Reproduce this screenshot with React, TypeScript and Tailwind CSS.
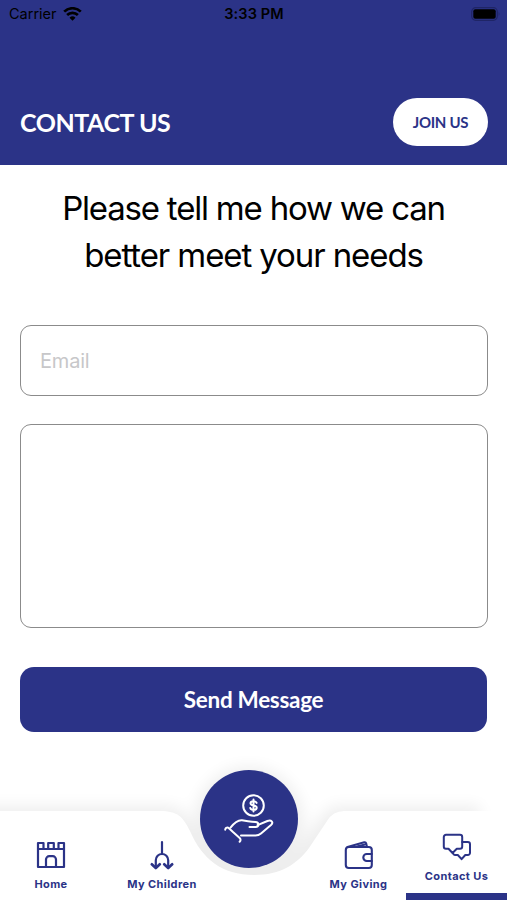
import type { ReactNode } from "react";

function WifiIcon() {
  return (
    <svg width="19" height="15" viewBox="0 0 19 15" fill="none" stroke="#000" strokeWidth="2.7">
      <path d="M1.2 4.6a12 12 0 0 1 16.6 0" />
      <path d="M4.1 8a7.8 7.8 0 0 1 10.8 0" />
      <path d="M9.5 13.7 6.500 10.700a4.300 4.300 0 0 1 6 0z" fill="#000" stroke="none" />
    </svg>
  );
}

function BatteryIcon() {
  return (
    <svg width="30" height="14" viewBox="0 0 30 14">
      <rect x="0.7" y="0.7" width="25.6" height="12.6" rx="4" fill="none" stroke="#1f2566" strokeWidth="1.2" />
      <rect x="2.3" y="2.3" width="22.4" height="9.4" rx="2" fill="#000" />
      <path d="M27.7 4.7q1.7 2.3 0 4.6z" fill="#1f2566" />
    </svg>
  );
}

function CastleIcon() {
  return (
    <svg width="30" height="28" viewBox="0 0 30 28" fill="none" stroke="#2b3387" strokeWidth="2.2" strokeLinejoin="round">
      <path d="M2 8V2h5.500v6M12.200 8V2h5.600v6M22.500 8V2H28v6" />
      <path d="M2 8h26v18H2z" />
      <path d="M10 26v-7.500a3.300 3.300 0 0 1 3.300-3.300h3.400a3.300 3.300 0 0 1 3.300 3.300V26" />
    </svg>
  );
}

function ChildrenIcon() {
  return (
    <svg width="26" height="30" viewBox="0 0 26 30" fill="none" stroke="#2b3387" strokeWidth="2.2" strokeLinecap="round" strokeLinejoin="round">
      <path d="M13 2v12" />
      <path d="M6.800 27.500V20.200a6.200 6.200 0 0 1 12.400 0v7.300" />
      <path d="M2.800 24.300l4 3.700 4-3.700" strokeWidth="2.700" />
      <path d="M15.200 24.300l4 3.700 4-3.700" strokeWidth="2.700" />
    </svg>
  );
}

function WalletIcon() {
  return (
    <svg width="30" height="30" viewBox="0 0 30 30" fill="none" stroke="#2b3387" strokeWidth="2.1" strokeLinejoin="round" strokeLinecap="round">
      <rect x="1.8" y="7" width="26" height="21" rx="3" />
      <path d="M3.5 7 20.2 2.300q1.500-.4 1.900 1L23 7" />
      <path d="M13 6.600 21 4.400" />
      <path d="M27.800 14h-5a3 3 0 0 0 0 7h5" />
    </svg>
  );
}

function ChatIcon() {
  return (
    <svg width="30" height="28" viewBox="0 0 30 28" fill="none" stroke="#2b3387" strokeWidth="2" strokeLinejoin="round" strokeLinecap="round">
      <path d="M4 1.800h14a2.200 2.200 0 0 1 2.200 2.200v9.600a2.200 2.200 0 0 1-2.200 2.200h-3.200L10.500 20l-4-4.200H4a2.200 2.200 0 0 1-2.200-2.200V4A2.200 2.200 0 0 1 4 1.800z" />
      <path d="M20.200 9h5.600a2.200 2.200 0 0 1 2.200 2.200v8.600a2.200 2.200 0 0 1-2.200 2.200h-2.500l-3.700 4.200-3.800-4.200h-2.600a2.200 2.200 0 0 1-2.200-2.200" />
    </svg>
  );
}

function GiveIcon() {
  return (
    <svg width="52" height="52" viewBox="0 0 52 52" fill="none" stroke="#fff" strokeWidth="2" strokeLinecap="round" strokeLinejoin="round">
      <circle cx="30.5" cy="12.5" r="10.3" />
      <path d="M33.600 9.900c-.5-1.200-1.500-1.700-3.100-1.700-1.800 0-3 .8-3 2.100 0 3.100 6.200 1.300 6.200 4.400 0 1.400-1.200 2.200-3.100 2.200-1.700 0-2.900-.7-3.300-1.900M30.500 6.500v12" />
      <path d="M2.200 36.700q.4-2.500 3.100-2 2.200 1.800 4.700 4.300l6.400 5.700q2.200 2 .2 4.100" />
      <path d="M7.500 34.700c4-5.200 7-7.800 11.500-7.400l6 .9c3 .4 5 .6 7.500.7 3.800.1 3.900 5.200.2 5.200h-6.200" />
      <path d="M34.600 32.200l9.800-4.200c3.800-1.700 6.500 1.200 3.600 4L38 40.500q-2.800 2.300-6.200 2H18" />
    </svg>
  );
}

interface TabProps {
  label: string;
  className: string;
  children: ReactNode;
}

function Tab({ label, className, children }: TabProps) {
  return (
    <button className={`flex flex-col items-center ${className}`}>
      <span className="flex h-[30px] items-center">{children}</span>
      <span className="mt-[7px] text-[11px] leading-[14px] font-bold tracking-[0.4px] whitespace-nowrap text-[#2b3387]">
        {label}
      </span>
    </button>
  );
}

export default function App() {
  return (
    <div className="flex h-[900px] w-[507px] flex-col overflow-hidden bg-white font-['Inter',sans-serif] text-black">
      {/* Header */}
      <header className="flex h-[165px] flex-col bg-[#2b3387]">
        <div className="grid h-7 grid-cols-3 items-center pr-[6px] pl-[9px]">
          <div className="flex items-center gap-[6px]">
            <span className="text-[14.5px]">Carrier</span>
            <WifiIcon />
          </div>
          <span className="-ml-[2px] text-center text-[14.5px] font-semibold tracking-[0.1px]">3:33 PM</span>
          <div className="flex justify-end">
            <BatteryIcon />
          </div>
        </div>
        <div className="mt-[70px] flex h-12 items-center justify-between pr-[19px] pl-5 font-['Lato',sans-serif]">
          <h1 className="pt-[2px] text-[25px] font-bold tracking-[-0.45px] text-white">CONTACT US</h1>
          <button className="h-12 w-[95px] rounded-full bg-white pt-px text-[15px] font-bold tracking-[-0.3px] text-[#2b3387]">
            JOIN US
          </button>
        </div>
      </header>

      {/* Contact form */}
      <main className="flex h-[645px] flex-col px-5 pt-5">
        <h2 className="text-center text-[33px] leading-[47px] tracking-[-1.2px] whitespace-nowrap">
          Please tell me how we can
          <br />
          <span className="tracking-[-1.1px]">better meet your needs</span>
        </h2>
        <input
          type="email"
          placeholder="Email"
          className="mt-[46px] h-[71px] w-[468px] shrink-0 rounded-[11px] border-[1.5px] border-[#8b8b8b] px-[19px] text-[20px] tracking-[-0.2px] outline-none placeholder:text-[#c7c7c9]"
        />
        <textarea className="mt-7 h-[204px] w-[468px] shrink-0 resize-none rounded-[11px] border-[1.5px] border-[#8b8b8b] p-5 outline-none" />
        <button className="mt-[39px] h-[65px] w-full shrink-0 rounded-[14px] bg-[#2b3387] pt-px font-['Lato',sans-serif] text-[22.5px] font-bold tracking-[-0.3px] text-white">
          Send Message
        </button>
      </main>

      {/* Tab bar */}
      <nav className="relative h-[90px] shrink-0">
        <svg className="absolute -top-[70px] left-0" width="507" height="160" viewBox="0 0 507 160">
          <defs>
            <filter id="barShadow" x="-20%" y="-50%" width="140%" height="200%">
              <feGaussianBlur stdDeviation="8" />
            </filter>
          </defs>
          <g filter="url(#barShadow)" opacity="0.065">
            <path d="M-40 66H165C180 66 187 73 195 90C207 118 224 134 249 134S292 118 305 98L325 73Q329 66 340 66H480V190H-40z" fill="#000" />
            <circle cx="249" cy="81" r="54" fill="#000" />
          </g>
          <path d="M0 71H160C178 71 183 77 190 91C202 119 222 135 254 135C281 135 297 124 309 108L327 81Q333 71 344 71H507V160H0z" fill="#fff" />
        </svg>
        <div className="relative flex h-full">
          <Tab label="Home" className="w-[102px] pt-[30px]">
            <CastleIcon />
          </Tab>
          <Tab label="My Children" className="w-[120px] pt-[30px]">
            <ChildrenIcon />
          </Tab>
          <button className="-mt-10 ml-[-22px] flex size-[98px] items-center justify-center rounded-full bg-[#2b3387]">
            <GiveIcon />
          </button>
          <Tab label="My Giving" className="ml-[10px] w-[101px] pt-[30px]">
            <WalletIcon />
          </Tab>
          <div className="ml-[-3px] flex w-[101px] flex-col justify-between">
            <Tab label="Contact Us" className="pt-[22px]">
              <ChatIcon />
            </Tab>
            <span className="h-[7px] bg-[#2b3387]" />
          </div>
        </div>
      </nav>
    </div>
  );
}
